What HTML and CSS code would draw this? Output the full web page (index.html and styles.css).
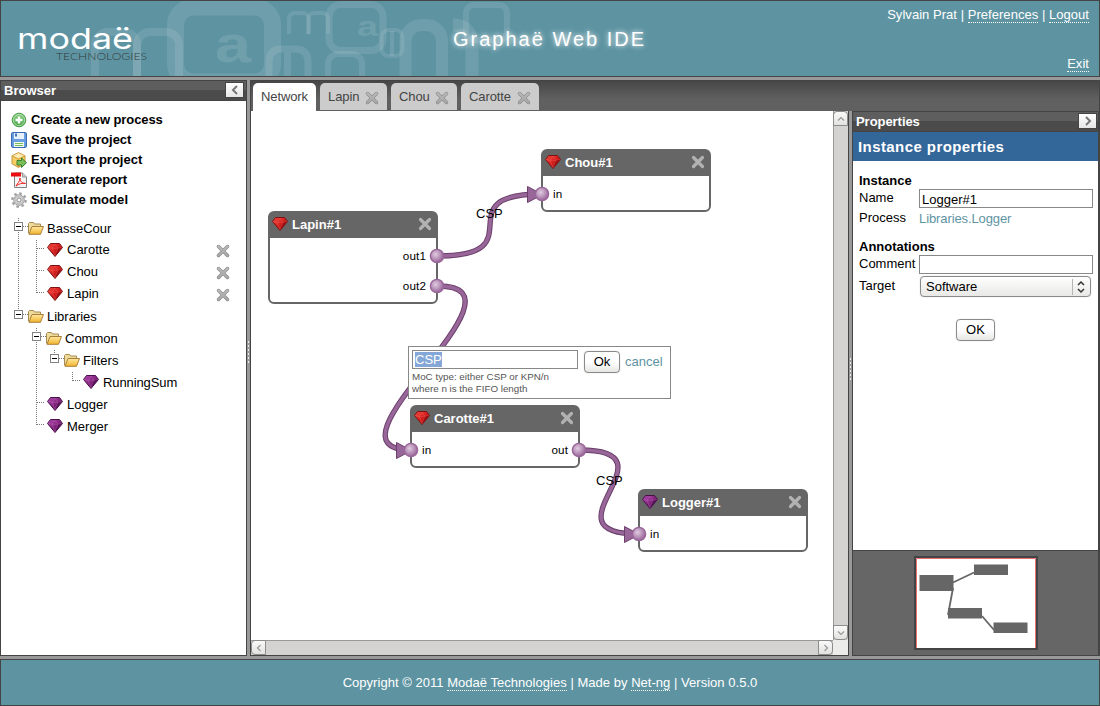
FILE: index.html
```html
<!DOCTYPE html>
<html lang="en">
<head>
<meta charset="utf-8">
<title>Graphaë Web IDE</title>
<link rel="stylesheet" href="styles.css">
</head>
<body>
<svg class="sprite" width="0" height="0">
  <defs>
    <linearGradient id="gRed" x1="0" y1="0" x2="1" y2="1"><stop offset="0" stop-color="#f04a40"/><stop offset=".5" stop-color="#d41e1e"/><stop offset="1" stop-color="#8e0a0e"/></linearGradient>
    <linearGradient id="gPur" x1="0" y1="0" x2="1" y2="1"><stop offset="0" stop-color="#b24ab4"/><stop offset=".5" stop-color="#84267c"/><stop offset="1" stop-color="#521050"/></linearGradient>
    <linearGradient id="gFold" x1="0" y1="0" x2="0" y2="1"><stop offset="0" stop-color="#ffe9a0"/><stop offset="1" stop-color="#f2b32c"/></linearGradient>
    <radialGradient id="gPort" cx=".4" cy=".38" r=".6"><stop offset="0" stop-color="#dfcbdf"/><stop offset=".55" stop-color="#bb96bb"/><stop offset="1" stop-color="#9c689c"/></radialGradient>
    <linearGradient id="gAdd" x1="0" y1="0" x2="0" y2="1"><stop offset="0" stop-color="#8fd08a"/><stop offset="1" stop-color="#46a340"/></linearGradient>
    <linearGradient id="gX" x1="0" y1="0" x2="0" y2="14" gradientUnits="userSpaceOnUse"><stop offset="0" stop-color="#bcbcbc"/><stop offset="1" stop-color="#a2a2a2"/></linearGradient>
    <clipPath id="smallArch"><rect x="284" y="8" width="50" height="26"/></clipPath>
  </defs>
  <symbol id="gem-red" viewBox="0 0 16 14">
    <path d="M3.5 .5h9l3 4-7.5 9-7.5-9z" fill="url(#gRed)" stroke="#7e1212"/>
    <path d="M1 4.500l4 .8 3-4 3 4 4-.8M5 5.300l3 7.200 3-7.200z" fill="none" stroke="#ff7b6b" stroke-width=".6" opacity=".5"/>
    <path d="M11 5.300l4-.8L8 13z" fill="#86080c" opacity=".55"/>
  </symbol>
  <symbol id="gem-pur" viewBox="0 0 16 14">
    <path d="M3.500 .5h9l3 4-7.500 9-7.500-9z" fill="url(#gPur)" stroke="#48104a"/>
    <path d="M1 4.500l4 .8 3-4 3 4 4-.8M5 5.300l3 7.200 3-7.200z" fill="none" stroke="#d17bd3" stroke-width=".6" opacity=".5"/>
    <path d="M11 5.300l4-.8L8 13z" fill="#460a48" opacity=".55"/>
  </symbol>
  <symbol id="cross" viewBox="0 0 14 14">
    <path d="M2.500 2.500l9 9M11.500 2.500l-9 9" stroke="#8c8c8c" stroke-width="3.500" stroke-linecap="round"/>
    <path d="M2.500 2.500l9 9M11.500 2.500l-9 9" stroke="url(#gX)" stroke-width="2.400" stroke-linecap="round"/>
  </symbol>
  <symbol id="cross-light" viewBox="0 0 14 14">
    <path d="M2.500 2.500l9 9M11.500 2.500l-9 9" stroke="#b2b2b2" stroke-width="3.200" stroke-linecap="round"/>
  </symbol>
  <symbol id="folder" viewBox="0 0 16 13">
    <path d="M.5 11.500v-10l1-1h4l1 1.500h6v3" fill="#efdc9c" stroke="#a68a4e"/>
    <path d="M1 12.300L4 4.500h11.500l-3 7.800z" fill="url(#gFold)" stroke="#a9803a"/>
  </symbol>
  <symbol id="minus" viewBox="0 0 9 9">
    <rect x=".5" y=".5" width="8" height="8" fill="#fff" stroke="#848484"/><path d="M2 4.500h5" stroke="#000"/>
  </symbol>
  <symbol id="port" viewBox="0 0 16 16">
    <circle cx="8" cy="8" r="6.600" fill="url(#gPort)" stroke="#996699" stroke-width="1.400"/>
  </symbol>
</svg>

<header class="top">
  <svg class="top-art" width="700" height="75" viewBox="1 1 700 75">
    <g fill="none" stroke="#fff" stroke-opacity=".1">
      <rect x="175.500" y="7" width="97" height="75" rx="18" stroke-width="17"/>
      <rect x="95" y="32" width="42" height="80" rx="13" stroke-width="8"/>
      <rect x="137" y="32" width="42" height="80" rx="13" stroke-width="8"/>
      <path d="M269 80V62q0-13 13-13h13q13 0 13 13v18M287.500 50v30" stroke-width="7"/>
      <rect x="329" y="4.500" width="54" height="46" rx="12" stroke-width="7"/>
      <rect x="328" y="54" width="34" height="80" rx="10" stroke-width="6"/>
      <rect x="405.500" y="25" width="36.500" height="90" rx="16" stroke-width="12"/>
      <rect x="466" y="5" width="41" height="35" rx="8" stroke-width="6"/>
      <path d="M453 25q19 0 19 22v30" stroke-width="13"/>
      <rect x="381.500" y="30" width="21" height="26" rx="7" stroke-width="4"/>
      <path d="M392 31v25" stroke-width="4"/>
      <g clip-path="url(#smallArch)" stroke-width="4">
        <rect x="289" y="13" width="19.500" height="40" rx="6"/>
        <rect x="308.500" y="13" width="19.500" height="40" rx="6"/>
      </g>
    </g>
    <g class="art-letters">
      <text x="215" y="62" font-size="52" textLength="36" lengthAdjust="spacingAndGlyphs">a</text>
      <text x="357" y="36" font-size="27" textLength="21" lengthAdjust="spacingAndGlyphs">a</text>
    </g>
    <g class="logo">
      <text class="logo-name" x="17" y="49" textLength="116" lengthAdjust="spacingAndGlyphs">modaë</text>
      <text class="logo-sub" x="56" y="60" textLength="91" lengthAdjust="spacingAndGlyphs">TECHNOLOGIES</text>
    </g>
  </svg>
  <h1>Graphaë Web IDE</h1>
  <nav class="user">
    <div>Sylvain Prat | <a>Preferences</a> | <a>Logout</a></div>
    <div><a>Exit</a></div>
  </nav>
</header>

<main class="work">
  <section class="browser">
    <div class="bar"><span>Browser</span><button class="fold"><svg width="8" height="10" viewBox="0 0 8 10"><path d="M6 1L2 5l4 4" fill="none" stroke="#777" stroke-width="2"/></svg></button></div>
    <ul class="actions">
      <li class="tight"><svg width="16" height="16" viewBox="0 0 16 16"><circle cx="8" cy="8" r="6.800" fill="url(#gAdd)" stroke="#4c9b48" /><circle cx="8" cy="8" r="5.600" fill="none" stroke="#b9e4b5" stroke-width=".8"/><path d="M8 4.500v7M4.500 8h7" stroke="#fff" stroke-width="2.400"/></svg>Create a new process</li>
      <li><svg width="16" height="16" viewBox="0 0 16 16"><rect x=".6" y=".6" width="14.800" height="14.800" rx="1" fill="#6b9fe2" stroke="#2e5fae"/><path d="M3 1h10v6H3z" fill="#e8f0fa"/><path d="M4 1.500h2v3H4z" fill="#4676bd"/><path d="M3 10h10v5H3z" fill="#f4f8ef"/><path d="M4 11.500h8M4 13.500h8" stroke="#73bd58" stroke-width="1.200"/></svg>Save the project</li>
      <li><svg width="16" height="16" viewBox="0 0 16 16"><path d="M7.500 .6L1 3.800v8L7.500 15.400 14 12V3.800z" fill="#f4cf68" stroke="#c9953a"/><path d="M1 3.800l6.500 3.400L14 3.800M7.500 7.200v8" fill="none" stroke="#d19c3c"/><path d="M2 3.800l5.500-2.600L13 3.800 7.500 6.300z" fill="#fcebb5"/><path d="M6 8.500h4.500V6l5 4.700-5 4.800V13H6z" fill="#78bf58" stroke="#3c7f33"/></svg>Export the project</li>
      <li class="tight"><svg width="16" height="16" viewBox="0 0 16 16"><path d="M3.500 1h8l4 4v10.500h-12z" fill="#f4f4f4" stroke="#818181"/><path d="M11.500 1v4h4" fill="#ccc" stroke="#999"/><path d="M0 .5h10v4H0z" fill="#e80e12"/><path d="M5 14c1-2.500 4-4 4-8 0 4 3 5.500 5.500 5.500C11 10.500 8 12 5 14z" fill="none" stroke="#e22" stroke-width="1"/></svg>Generate report</li>
      <li class="loose"><svg width="16" height="16" viewBox="0 0 16 16"><circle cx="8" cy="8" r="6.700" fill="none" stroke="#a0a0a0" stroke-width="2.200" stroke-dasharray="2.630 2.630"/><circle cx="8" cy="8" r="5.300" fill="#d6d6d6" stroke="#a0a0a0"/><circle cx="8" cy="8" r="4" fill="none" stroke="#c0c0c0"/><circle cx="8" cy="8" r="2" fill="#fff" stroke="#909090"/></svg>Simulate model</li>
    </ul>
    <div class="tree">
      <svg class="tree-lines" width="100" height="220" viewBox="0 217 100 220">
        <g fill="none" stroke="#777" stroke-dasharray="1 1">
          <path d="M18.500 218v96M23 226.500h5M36.500 240v53M37 248.500h8M37 270.500h8M37 292.500h8M23 314.500h5M36.500 328v97M41 336.500h5M54.500 350v6M59 358.500h5M72.500 372v9M73 380.500h8M37 402.500h8M37 424.500h8"/>
        </g>
      </svg>
      <div class="row d0"><svg class="mi" width="9" height="9"><use href="#minus"/></svg><svg class="fo" width="16" height="13"><use href="#folder"/></svg><span>BasseCour</span></div>
      <div class="row d1 up"><svg width="16" height="14"><use href="#gem-red"/></svg><span>Carotte</span><svg class="del" width="14" height="14"><use href="#cross"/></svg></div>
      <div class="row d1 up"><svg width="16" height="14"><use href="#gem-red"/></svg><span>Chou</span><svg class="del" width="14" height="14"><use href="#cross"/></svg></div>
      <div class="row d1 up"><svg width="16" height="14"><use href="#gem-red"/></svg><span>Lapin</span><svg class="del" width="14" height="14"><use href="#cross"/></svg></div>
      <div class="row d0"><svg class="mi" width="9" height="9"><use href="#minus"/></svg><svg class="fo" width="16" height="13"><use href="#folder"/></svg><span>Libraries</span></div>
      <div class="row f1"><svg class="mi" width="9" height="9"><use href="#minus"/></svg><svg class="fo" width="16" height="13"><use href="#folder"/></svg><span>Common</span></div>
      <div class="row f2"><svg class="mi" width="9" height="9"><use href="#minus"/></svg><svg class="fo" width="16" height="13"><use href="#folder"/></svg><span>Filters</span></div>
      <div class="row d3"><svg width="16" height="14"><use href="#gem-pur"/></svg><span>RunningSum</span></div>
      <div class="row d1"><svg width="16" height="14"><use href="#gem-pur"/></svg><span>Logger</span></div>
      <div class="row d1"><svg width="16" height="14"><use href="#gem-pur"/></svg><span>Merger</span></div>
    </div>
  </section>
  <div class="split split-left"><i></i></div>

  <section class="center">
    <div class="tabs">
      <div class="tab on">Network</div>
      <div class="tab t-lapin">Lapin<svg width="14" height="14"><use href="#cross"/></svg></div>
      <div class="tab t-chou">Chou<svg width="14" height="14"><use href="#cross"/></svg></div>
      <div class="tab t-carotte">Carotte<svg width="14" height="14"><use href="#cross"/></svg></div>
    </div>
    <div class="under">
      <div class="editor">
        <div class="canvas">
          <svg class="wires" width="582" height="529" viewBox="251 111 582 529">
            <g fill="none" stroke="#6b406b" stroke-width="5.400">
              <path d="M438 256C538 256 442 194 542 194"/>
              <path d="M438 286C541 286 311 450 411 450"/>
              <path d="M580 450C680 450 539 534 639 534"/>
            </g>
            <g fill="none" stroke="#996699" stroke-width="3.400">
              <path d="M438 256C538 256 442 194 542 194"/>
              <path d="M438 286C541 286 311 450 411 450"/>
              <path d="M580 450C680 450 539 534 639 534"/>
            </g>
            <g fill="#996699" stroke="#6b406b">
              <path d="M527.500 186.500v16l15-8zM396.500 442.500v16l15-8zM624.500 526.500v16l15-8z"/>
            </g>
          </svg>
          <div class="wl wl1">CSP</div>
          <div class="wl wl3">CSP</div>

          <article class="node lapin">
            <h3><svg width="16" height="14"><use href="#gem-red"/></svg><span>Lapin#1</span><svg class="nx" width="14" height="14"><use href="#cross-light"/></svg></h3>
            <div class="io"><em></em><em>out1</em></div>
            <div class="io"><em></em><em>out2</em></div>
            <svg class="port r p1" width="16" height="16"><use href="#port"/></svg>
            <svg class="port r p2" width="16" height="16"><use href="#port"/></svg>
          </article>
          <article class="node chou">
            <h3><svg width="16" height="14"><use href="#gem-red"/></svg><span>Chou#1</span><svg class="nx" width="14" height="14"><use href="#cross-light"/></svg></h3>
            <div class="io"><em>in</em></div>
            <svg class="port l p1" width="16" height="16"><use href="#port"/></svg>
          </article>
          <article class="node carotte">
            <h3><svg width="16" height="14"><use href="#gem-red"/></svg><span>Carotte#1</span><svg class="nx" width="14" height="14"><use href="#cross-light"/></svg></h3>
            <div class="io"><em>in</em><em>out</em></div>
            <svg class="port l p1" width="16" height="16"><use href="#port"/></svg>
            <svg class="port r p1" width="16" height="16"><use href="#port"/></svg>
          </article>
          <article class="node logger">
            <h3><svg width="16" height="14"><use href="#gem-pur"/></svg><span>Logger#1</span><svg class="nx" width="14" height="14"><use href="#cross-light"/></svg></h3>
            <div class="io"><em>in</em></div>
            <svg class="port l p1" width="16" height="16"><use href="#port"/></svg>
          </article>

          <div class="popup">
            <div class="pop-row">
              <div class="field"><span class="sel">CSP</span></div>
              <button class="btn">Ok</button>
              <a>cancel</a>
            </div>
            <p>MoC type: either CSP or KPN/n<br>where n is the FIFO length</p>
          </div>
        </div>
        <div class="vs">
          <b><svg width="8" height="6" viewBox="0 0 8 6"><path d="M1 4.500l3-3 3 3"/></svg></b>
          <b class="end"><svg width="8" height="6" viewBox="0 0 8 6"><path d="M1 1.500l3 3 3-3"/></svg></b>
        </div>
        <div class="hs">
          <b><svg width="6" height="8" viewBox="0 0 6 8"><path d="M4.500 1l-3 3 3 3"/></svg></b>
          <b class="end"><svg width="6" height="8" viewBox="0 0 6 8"><path d="M1.500 1l3 3-3 3"/></svg></b>
        </div>
        <div class="corner"></div>
      </div>
      <div class="split split-right"><i></i></div>

      <section class="props">
        <div class="bar"><span>Properties</span><button class="fold"><svg width="8" height="10" viewBox="0 0 8 10"><path d="M2 1l4 4-4 4" fill="none" stroke="#777" stroke-width="2"/></svg></button></div>
        <h2>Instance properties</h2>
        <div class="form">
          <h4>Instance</h4>
          <div class="line"><label>Name</label><div class="field">Logger#1</div></div>
          <div class="line l2"><label>Process</label><a>Libraries.Logger</a></div>
          <h4 class="second">Annotations</h4>
          <div class="line"><label>Comment</label><div class="field"></div></div>
          <div class="line l3"><label>Target</label>
            <div class="select"><span>Software</span><svg width="18" height="16" viewBox="0 0 18 16"><path d="M.5 0v16" stroke="#b5b5b5"/><path d="M6 6l3-3 3 3M6 10l3 3 3-3" fill="none" stroke="#333" stroke-width="1.500"/></svg></div>
          </div>
          <button class="btn ok">OK</button>
        </div>
        <div class="mini">
          <svg width="124" height="94" viewBox="914 556 124 94">
            <rect x="915" y="557" width="122" height="92" fill="#fff" stroke="#444" stroke-width="2"/>
            <path d="M916.500 648v-89.500h119V648" fill="none" stroke="#e47070" stroke-width="1"/>
            <path d="M953 582.500l21-10M953 588l-5 27M982 616l12 14" stroke="#666" stroke-width="1.800"/>
            <path d="M919.500 575h34v16h-34zM974 564.500h34v10.500h-34zM948 608h34v10.500h-34zM993.500 622.500h34V633h-34z" fill="#666"/>
          </svg>
        </div>
      </section>
    </div>
  </section>
</main>

<footer class="foot">Copyright © 2011&nbsp;<a>Modaë Technologies</a>&nbsp;| Made by&nbsp;<a>Net-ng</a>&nbsp;| Version 0.5.0</footer>
</body>
</html>
```
FILE: styles.css
```css
* { box-sizing: border-box; }
body {
  margin: 0;
  width: 1100px;
  height: 706px;
  overflow: hidden;
  display: flex;
  flex-direction: column;
  gap: 3px;
  background: #999;
  font: 13px/20px "Liberation Sans", Arial, sans-serif;
  color: #000;
}
svg { display: block; flex: none; }
.sprite { position: absolute; }
h1, h2, h3, h4, p, ul { margin: 0; padding: 0; font-size: inherit; }
em { font-style: normal; }
button { font: inherit; color: #000; padding: 0; }

/* header */
.top {
  height: 77px;
  flex: none;
  border: 1px solid #444;
  background: #5e94a2;
  color: #fff;
  position: relative;
  display: flex;
  justify-content: flex-end;
}
.top-art { position: absolute; left: 0; top: 0; }
.art-letters { fill: #fff; opacity: .1; font-family: "Liberation Sans", sans-serif; font-weight: bold; }
.logo-name { font: 29px Inter, sans-serif; fill: #fff; }
.logo-sub { font: 300 10.5px Lato, sans-serif; fill: #333c40; }
.top h1 {
  position: absolute;
  left: 452px;
  top: 25px;
  font: 20px/26px "Liberation Sans", Arial, sans-serif;
  letter-spacing: 2px;
  text-shadow: 0 0 5px #fff;
  white-space: nowrap;
}
.user {
  display: flex;
  flex-direction: column;
  justify-content: space-between;
  padding: 5px 10px 4px 0;
  line-height: 17px;
  text-align: right;
  letter-spacing: .04px;
}
.user a, .foot a { border-bottom: 1px dotted #fff; }

/* work area */
.work { height: 576px; flex: none; display: flex; }
.bar {
  height: 20px;
  border-bottom: 1px solid #444;
  background: linear-gradient(#5e5e5e 45%, #4b4b4b 45%);
  color: #fff;
  font-weight: bold;
  line-height: 19px;
  padding: 0 2px 0 3px;
  display: flex;
  justify-content: space-between;
}
.fold {
  width: 19px;
  height: 16px;
  margin-top: 1px;
  border: 1px solid #444;
  background: linear-gradient(#fff, #e6e6e6);
  display: flex;
  align-items: center;
  justify-content: center;
}
.browser { width: 247px; border: 1px solid #444; background: #fff; }
.actions { list-style: none; padding: 9px 0 0 10px; font-weight: bold; }
.actions li { height: 20px; display: flex; align-items: center; gap: 4px; }
.actions .tight { letter-spacing: -.1px; }
.actions .loose { letter-spacing: .07px; }

.tree { position: relative; margin-top: 7px; }
.tree-lines { position: absolute; left: 0; top: 0; margin-left: -1px; }
.row { height: 22px; display: flex; align-items: center; position: relative; }
.row span { margin: 2px 0 0 4px; }
.row.up span { margin-top: 0; }
.row .fo { margin: 0 0 0 5px; }
.row .fo + span { margin-left: 3px; }
.row .mi { margin-top: -3px; }
.row .del { margin: 2px 16px 0 auto; }
.d0 { padding-left: 13px; }
.f1 { padding-left: 31px; }
.f2 { padding-left: 49px; }
.d1 { padding-left: 46px; }
.d3 { padding-left: 82px; letter-spacing: -.1px; }

.split { width: 3px; flex: none; display: flex; background: #999; }
.split i { width: 1px; height: 22px; margin: auto 0 auto 1px; background: repeating-linear-gradient(#eee 0 2px, #999 2px 4px); }
.split-left i { margin-top: 261px; }
.split-right i { margin-top: 247px; }

.center {
  flex: 1;
  display: flex;
  flex-direction: column;
  border: solid #444;
  border-width: 1px 1px 0;
}
.tabs {
  height: 30px;
  flex: none;
  background: linear-gradient(#474747, #606060 60%);
  display: flex;
  align-items: flex-start;
  gap: 4px;
  padding: 2px 0 0 2px;
}
.tab {
  height: 27px;
  padding: 0 8px;
  border-radius: 5px 5px 0 0;
  background: #ccc;
  color: #444;
  line-height: 27px;
  letter-spacing: -.1px;
  display: flex;
  justify-content: space-between;
  white-space: nowrap;
}
.tab.on { width: 63px; height: 28px; background: #fff; }
.t-lapin { width: 67px; }
.t-chou { width: 66px; }
.t-carotte { width: 78px; }
.tab svg { margin-top: 8px; }

.under { flex: 1; display: flex; }
.editor {
  width: 598px;
  border: solid #444;
  border-width: 0 1px 1px 0;
  display: grid;
  grid-template: 529px 15px / 582px 15px;
}
.canvas { position: relative; background: #fff; overflow: hidden; }
.wires { position: absolute; left: 0; top: 0; }
.vs, .hs { background: #d4d3d1; display: flex; justify-content: space-between; }
.vs { flex-direction: column; border-left: 1px solid #999; }
.hs { border-top: 1px solid #999; }
.vs b, .hs b {
  display: flex;
  align-items: center;
  justify-content: center;
  border: 1px solid #8c8c8c;
  background: linear-gradient(#fafafa, #e2e2e0);
}
.vs b { height: 15px; margin-left: -1px; border-radius: 4px 4px 0 0; }
.vs b.end { border-radius: 0 0 4px 4px; }
.hs b { width: 15px; height: 15px; margin-top: -1px; border-radius: 4px 0 0 4px; }
.hs b.end { border-radius: 0 4px 4px 0; }
.vs path, .hs path { fill: none; stroke: #999; stroke-width: 1.2; }
.corner { background: #ececeb; }

/* diagram nodes, positioned on the free canvas */
.node {
  position: absolute;
  width: 170px;
  height: 63px;
  border: 2px solid #666;
  border-radius: 6px;
  background: #fff;
}
.lapin { left: 17px; top: 100px; height: 93px; }
.chou { left: 290px; top: 38px; }
.carotte { left: 159px; top: 294px; }
.logger { left: 387px; top: 378px; }
.node h3 {
  height: 25px;
  padding: 4px 4px 0 2px;
  background: #666;
  color: #fff;
  line-height: 20px;
  display: flex;
  align-items: flex-start;
}
.node h3 span { margin: -2px auto 0 4px; }
.io {
  height: 30px;
  padding: 7px 10px 0;
  display: flex;
  justify-content: space-between;
  font-size: 11.7px;
  line-height: 20px;
  letter-spacing: .1px;
}
.node h3 + .io { margin-top: 1px; }
.port { position: absolute; }
.port.l { left: -9px; }
.port.r { right: -9px; }
.p1 { top: 35px; }
.p2 { top: 65px; }
.wl { position: absolute; line-height: 16px; z-index: 1; }
.wl1 { left: 225px; top: 95px; }
.wl3 { left: 345px; top: 362px; }

.popup {
  position: absolute;
  left: 157px;
  top: 235px;
  width: 263px;
  height: 53px;
  border: 1px solid #888;
  background: #fff;
  padding: 3px;
}
.pop-row { display: flex; height: 19px; }
.popup .field { width: 166px; }
.popup .btn { width: 36px; margin: 1px 5px 0 6px; }
.field { height: 19px; border: 1px solid #888; background: #fff; line-height: 18px; padding: 1px 2px; }
.sel { display: inline-block; height: 15px; line-height: 16px; background: #84a7d8; color: #fff; vertical-align: top; }
.popup a { line-height: 23px; }
.popup p { font-size: 9.8px; line-height: 12px; color: #555; margin-top: 2px; }
.popup a, .form a { color: #5e94a2; }
.btn {
  height: 22px;
  border: 1px solid #8a8a8a;
  border-radius: 4px;
  background: linear-gradient(#fff 50%, #e6e6e4);
  box-shadow: 0 0 1px #aaa;
}

/* properties */
.props {
  flex: 1;
  display: flex;
  flex-direction: column;
  border: 1px solid #444;
  background: #fff;
}
.props .bar { padding-right: 1px; letter-spacing: -.05px; }
.props h2 {
  height: 29px;
  background: #369;
  color: #fff;
  font-size: 15px;
  line-height: 29px;
  letter-spacing: .42px;
  padding-left: 5px;
}
.form { flex: 1; padding: 12px 5px 0 6px; display: flex; flex-direction: column; }
.form h4 { height: 16px; line-height: 15px; }
.form h4.second { margin-top: 11px; }
.line { display: flex; }
.line label { width: 60px; line-height: 18px; }
.line .field { width: 174px; }
.line .field { line-height: 17px; }
.l2 { height: 20px; }
.l2 label { line-height: 19px; }
.l2 a { line-height: 21px; letter-spacing: -.1px; }
.l3 { padding-top: 2px; }
.l3 label { line-height: 20px; }
.select {
  width: 171px;
  height: 21px;
  border: 1px solid #8a8a8a;
  border-radius: 4px;
  background: linear-gradient(#fff, #e8e8e6);
  box-shadow: 0 0 1px #aaa;
  margin-left: 1px;
  padding-left: 5px;
  display: flex;
  justify-content: space-between;
  align-items: center;
}
.btn.ok { width: 39px; margin: 22px 0 0 97px; }
.mini {
  height: 105px;
  border-top: 1px solid #444;
  background: #666;
  display: flex;
  justify-content: center;
  padding-top: 5px;
}

.foot {
  flex: 1;
  border: 1px solid #444;
  background: #5e94a2;
  color: #fff;
  letter-spacing: .03px;
  display: flex;
  align-items: center;
  justify-content: center;
}
.foot a { line-height: 15px; }
```
